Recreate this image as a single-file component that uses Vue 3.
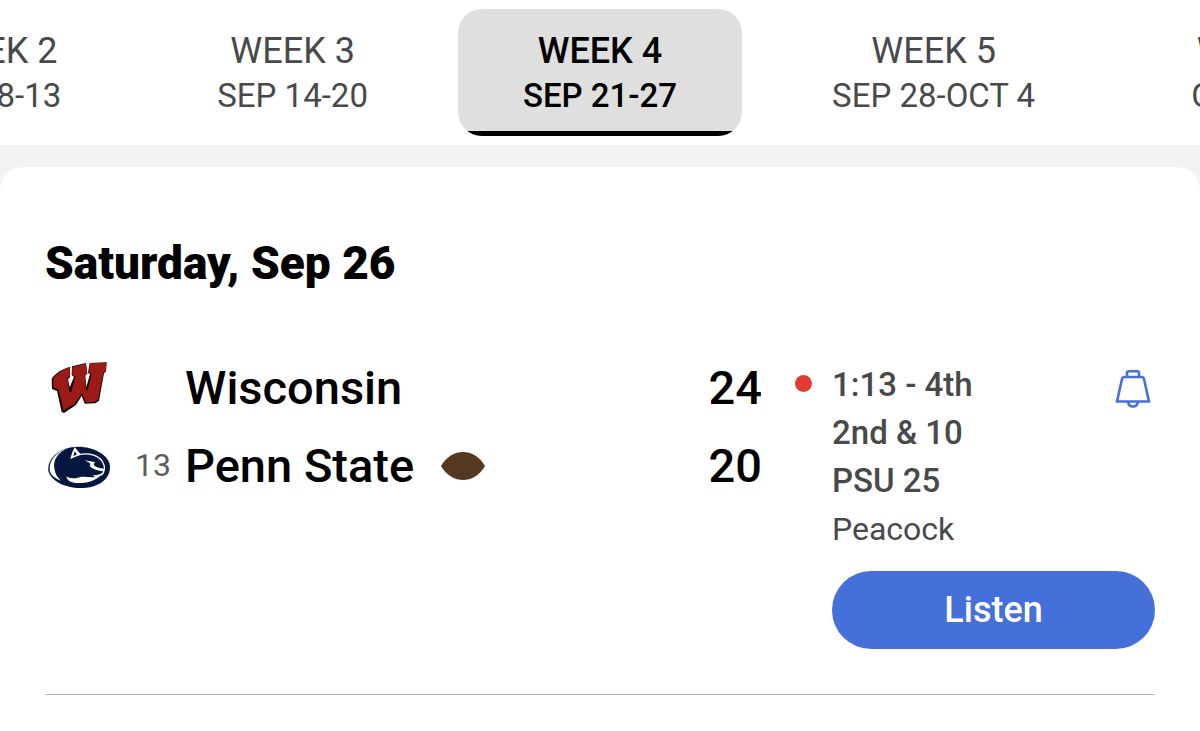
<script setup>
const before = [
  { week: 'WEEK 2', dates: 'SEP 8-13' },
  { week: 'WEEK 3', dates: 'SEP 14-20' },
]
const current = { week: 'WEEK 4', dates: 'SEP 21-27' }
const after = [
  { week: 'WEEK 5', dates: 'SEP 28-OCT 4' },
  { week: 'WEEK 6', dates: 'OCT 5-11' },
]
</script>

<template>
  <div class="page">
    <nav class="weeks" aria-label="Weeks">
      <div class="side side-before">
        <button v-for="w in before" :key="w.week" type="button" class="tab">
          <span class="week">{{ w.week }}</span>
          <span class="dates">{{ w.dates }}</span>
        </button>
      </div>
      <button type="button" class="tab active" aria-current="true">
        <span class="week">{{ current.week }}</span>
        <span class="dates">{{ current.dates }}</span>
      </button>
      <div class="side">
        <button v-for="w in after" :key="w.week" type="button" class="tab">
          <span class="week">{{ w.week }}</span>
          <span class="dates">{{ w.dates }}</span>
        </button>
      </div>
    </nav>

    <main class="card">
      <h1>Saturday, Sep 26</h1>

      <article class="game">
        <div class="teams">
          <div class="team">
            <svg class="logo" viewBox="24 31 192 162" width="64" height="54" aria-hidden="true">
              <path fill="#1b0707" d="M35 87 L42 78 Q60 60 90 51 L90 83 L84 89 L89 113 L102 82 L95 76 L96 50 L138 40 L142 72 L136 77 L139 112 L150 74 L144 69 L149 40 L200 38 L198 66 L192 70 L177 153 L166 161 L134 162 L125 138 L108 166 L72 190 L65 187 L51 124 L36 118 Z" />
              <path fill="#9b1b16" d="M41 84 Q58 64 89 53 L89 81 L82 85 L88 128 L94 126 L106 81 L97 76 L97 52 L138 42 L141 71 L134 76 L138 123 L143 122 L155 74 L146 68 L150 41 L199 39 L197 65 L190 68 L174 150 L164 156 L137 158 L126 130 L104 162 L71 182 L55 119 L40 113 Z" />
            </svg>
            <span class="rank"></span>
            <span class="name">Wisconsin</span>
            <span class="score">24</span>
          </div>
          <div class="team">
            <svg class="logo" viewBox="24 10 192 144" width="64" height="48" aria-hidden="true">
              <path fill="#06173f" d="M94 29 C145 20 211 47 210 90 C208 133 163 152 118 151 C66 149 32 126 25 99 C21 67 50 37 94 29 Z" />
              <path fill="#fff" d="M84 31 C52 44 39 70 43 90 C45 109 53 120 63 129 C42 122 31 110 29 98 C26 68 50 41 84 31 Z" />
              <path fill="#fff" d="M91 64 C94 52 98 39 104 29 C110 35 115 43 121 48 L119 53 L107 57 Z" />
              <path fill="#06173f" d="M104 41 L111 50 L100 56 Z" />
              <path fill="none" stroke="#fff" stroke-width="4" d="M117 51 C149 44 178 55 188 73 C196 87 194 102 184 113" />
              <path fill="#fff" d="M136 67 C146 72 156 70 166 74 C157 79 162 85 172 89 C180 93 188 92 192 94 L190 101 C176 99 158 95 149 85 C153 82 151 77 148 75 C143 73 139 71 136 67 Z" />
              <path fill="#fff" d="M79 116 C91 125 108 122 121 118 C137 115 151 121 165 118 L157 112 C169 114 179 111 188 105 C178 123 151 135 123 136 C100 138 81 132 79 116 Z" />
            </svg>
            <span class="rank">13</span>
            <span class="name">Penn State</span>
            <svg class="ball" viewBox="0 0 44 30" width="44" height="30" role="img" aria-label="Possession">
              <path fill="#553820" d="M0 16 C6 6 14 2 22 2 C30 2 38 6 44 16 C38 26 30 30 22 30 C14 30 6 26 0 16 Z" />
            </svg>
            <span class="score">20</span>
          </div>
        </div>

        <span class="live" role="img" aria-label="Live"></span>

        <div class="status">
          <div class="details">
            <div>
              <p class="strong">1:13 - 4th</p>
              <p class="strong">2nd &amp; 10</p>
              <p class="strong">PSU 25</p>
              <p>Peacock</p>
            </div>
            <button type="button" class="bell" aria-label="Game alerts">
              <svg viewBox="0 0 36 40" width="36" height="40" fill="none" stroke="#4570d9" stroke-width="2.6">
                <path d="M12 8 V4 Q12 2.300 13.700 2.300 H22.300 Q24 2.300 24 4 V8" />
                <path d="M9.500 8 H26.500 Q28.500 8 29 10 L34 32.500 H2 L7 10 Q7.500 8 9.500 8 Z" />
                <path d="M13 33 Q14 37.500 18 37.500 Q22 37.500 23 33" />
              </svg>
            </button>
          </div>
          <button type="button" class="listen">Listen</button>
        </div>
      </article>
    </main>
  </div>
</template>

<style>
body {
  margin: 0;
  background: #fff;
}
</style>

<style scoped>
.page {
  min-height: 100vh;
  overflow: hidden;
  background: #f3f3f3;
  font-family: Roboto, "Liberation Sans", sans-serif;
  color: #000;
  display: flex;
  flex-direction: column;
}
button {
  font: inherit;
  border: 0;
  padding: 0;
  background: none;
  cursor: pointer;
}
.weeks {
  display: grid;
  grid-template-columns: minmax(0, 1fr) auto minmax(0, 1fr);
  gap: 24px;
  padding: 9px 0;
  background: #fff;
}
.side {
  display: flex;
  gap: 24px;
}
.side-before {
  justify-content: flex-end;
}
.tab {
  flex: none;
  display: flex;
  flex-direction: column;
  align-items: center;
  padding: 20px 66px 18px;
  color: #48494a;
  white-space: nowrap;
}
.week {
  font-size: 36px;
  line-height: 44px;
}
.dates {
  font-size: 33px;
  line-height: 45px;
}
.active {
  position: relative;
  overflow: hidden;
  padding-right: 65px;
  padding-left: 65px;
  border-radius: 24px;
  background: #dfdfdf;
  color: #000;
  font-weight: 500;
}
.active::after {
  content: "";
  position: absolute;
  inset: auto 0 0;
  height: 5px;
  background: #000;
}
.card {
  flex: 1;
  margin-top: 22px;
  padding: 66px 45px 36px;
  border-radius: 24px 24px 0 0;
  background: #fff;
}
h1 {
  margin: 0;
  font-size: 46px;
  line-height: 60px;
  font-weight: 900;
}
.game {
  display: grid;
  grid-template-columns: minmax(0, 1fr) auto 323px;
  margin-top: 55px;
  padding: 13px 0 45px;
  border-bottom: 1px solid #b9babb;
}
.teams {
  margin-top: -13px;
}
.team {
  display: flex;
  align-items: center;
  height: 78px;
}
.logo {
  flex: none;
  margin-left: 3px;
}
.rank {
  width: 59px;
  margin-right: 14px;
  text-align: right;
  font-size: 32px;
  color: #5c5d5f;
}
.name,
.score {
  font-size: 47px;
  font-weight: 500;
}
.score {
  margin-left: auto;
}
.ball {
  margin-left: 27px;
}
.live {
  width: 17px;
  height: 17px;
  margin: 14px 20px 0 33px;
  border-radius: 50%;
  background: #e23b36;
}
.details {
  display: flex;
  justify-content: space-between;
}
.details p {
  margin: 0;
  font-size: 32px;
  line-height: 48px;
  color: #48494a;
}
.details .strong {
  font-size: 33px;
  font-weight: 500;
}
.bell {
  align-self: flex-start;
  margin: 8px 4px 0 0;
}
.bell svg {
  display: block;
}
.listen {
  display: block;
  width: 100%;
  height: 78px;
  margin-top: 18px;
  border-radius: 39px;
  background: #4570d9;
  color: #fff;
  font-size: 36px;
  font-weight: 500;
}
</style>
